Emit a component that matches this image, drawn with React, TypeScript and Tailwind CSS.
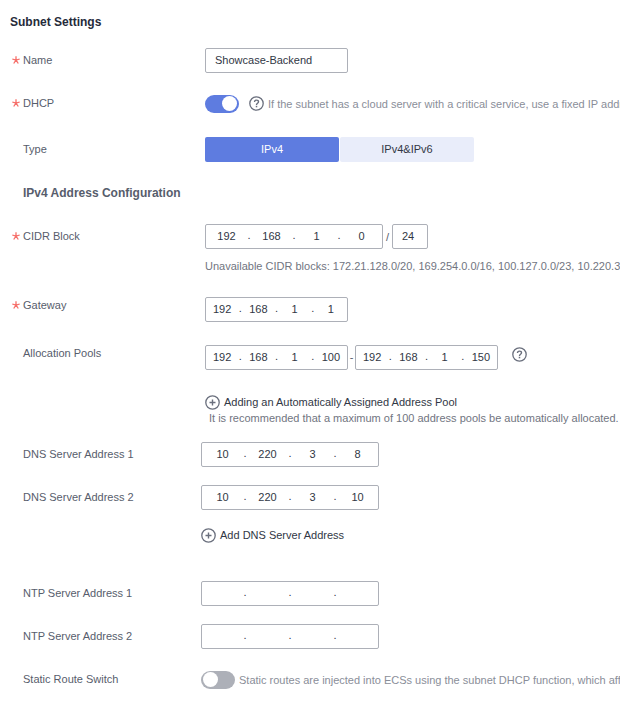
import { useState, type ReactNode } from "react";

type Segments = [string, string, string, string];

function RequiredMark() {
  return (
    <svg className="size-2 shrink-0" viewBox="0 0 8 8" fill="none" stroke="#f66f6a" strokeWidth="1.3" aria-hidden="true">
      <path d="M4 4.2V0.3M4 4.2L0.3 3M4 4.2L7.7 3M4 4.2L1.7 7.5M4 4.2L6.3 7.5" />
    </svg>
  );
}

function HelpIcon() {
  return (
    <svg className="size-[15px] shrink-0" viewBox="0.5 0.5 15 15" fill="none" stroke="#6a6f7d" aria-hidden="true">
      <circle cx="8" cy="8" r="6.7" strokeWidth="1.3" />
      <path d="M6 6.5C6 5.2 6.8 4.6 8 4.6s2 0.7 2 1.7c0 1.4-2 1.5-2 3.1" strokeWidth="1.4" />
      <path d="M8 10.3v1.5" strokeWidth="1.5" />
    </svg>
  );
}

function PlusIcon() {
  return (
    <svg className="size-[15px] shrink-0" viewBox="0.5 0.5 15 15" fill="none" stroke="#6a6f7d" aria-hidden="true">
      <circle cx="8" cy="8" r="6.7" strokeWidth="1.3" />
      <path d="M8 5v6M5 8h6" strokeWidth="1.4" />
    </svg>
  );
}

function Row({
  label,
  htmlFor,
  required = false,
  raised = false,
  narrow = false,
  children,
}: {
  label: string;
  htmlFor: string;
  required?: boolean;
  raised?: boolean;
  narrow?: boolean;
  children: ReactNode;
}) {
  return (
    <div className="flex items-start">
      <div className={`flex shrink-0 items-center pl-3 ${narrow ? "w-[201px]" : "w-[205px]"} ${raised ? "h-4" : "h-6"}`}>
        <span className="flex w-[11px] shrink-0">{required ? <RequiredMark /> : null}</span>
        <label htmlFor={htmlFor}>{label}</label>
      </div>
      <div className="min-w-0 flex-1">{children}</div>
    </div>
  );
}

function IpInput({ id, label, value, small = false }: { id: string; label: string; value: Segments; small?: boolean }) {
  return (
    <div
      className={`flex h-[25px] shrink-0 items-center rounded-xs border border-[#adb0b8] bg-white text-[#313745] ${small ? "w-[143px]" : "w-[178px]"}`}
      role="group"
      aria-label={label}
    >
      {value.map((part, i) => (
        <div key={i} className="contents">
          {i > 0 ? <span className="w-1 pb-[3px] text-center">.</span> : null}
          <input
            id={i === 0 ? id : `${id}-${i + 1}`}
            className="h-full w-0 min-w-0 flex-1 bg-transparent pb-px text-center outline-none"
            aria-label={`${label} octet ${i + 1}`}
            defaultValue={part}
            maxLength={3}
          />
        </div>
      ))}
    </div>
  );
}

function Toggle({ id, defaultChecked = false }: { id: string; defaultChecked?: boolean }) {
  return (
    <input
      id={id}
      type="checkbox"
      role="switch"
      defaultChecked={defaultChecked}
      className="flex h-[18px] w-[34px] shrink-0 cursor-pointer appearance-none items-center rounded-full bg-[#adb0b8] px-[2px] before:size-[15px] before:rounded-full before:bg-white before:content-[''] checked:justify-end checked:bg-[#5e7ce0]"
    />
  );
}

export default function App() {
  const [type, setType] = useState("IPv4");

  return (
    <form
      className="min-h-screen w-full overflow-hidden bg-white pt-3 pb-8 font-['Liberation_Sans',Arial,sans-serif] text-[11px] leading-4 text-[#575d6c]"
      onSubmit={(e) => e.preventDefault()}
    >
      <h1 className="pl-[10px] text-xs leading-5 font-bold text-[#252b3a]">Subnet Settings</h1>

      <div className="mt-4 space-y-[18px]">
        <Row label="Name" htmlFor="name" required>
          <input
            id="name"
            className="block h-[25px] w-[143px] rounded-xs border border-[#adb0b8] px-[9px] pb-px text-[#313745] outline-none"
            defaultValue="Showcase-Backend"
          />
        </Row>
        <Row label="DHCP" htmlFor="dhcp" required>
          <div className="flex h-[25px] items-center">
            <Toggle id="dhcp" defaultChecked />
            <span className="ml-[10px] flex"><HelpIcon /></span>
            <span className="ml-1 whitespace-nowrap text-[#8a8e99]">
              If the subnet has a cloud server with a critical service, use a fixed IP address
            </span>
          </div>
        </Row>
      </div>

      <div className="mt-[21px] space-y-[21px]">
        <Row label="Type" htmlFor="type-ipv4">
          <div className="flex gap-px">
            {["IPv4", "IPv4&IPv6"].map((option) => (
              <button
                key={option}
                id={option === "IPv4" ? "type-ipv4" : "type-dual"}
                type="button"
                aria-pressed={type === option}
                onClick={() => setType(option)}
                className={`h-[25px] w-[134px] rounded-xs pb-px ${type === option ? "bg-[#5e7ce0] text-white" : "bg-[#e9edfa] text-[#313745]"}`}
              >
                {option}
              </button>
            ))}
          </div>
        </Row>

        <h2 className="pl-[23px] text-xs leading-5 font-bold">IPv4 Address Configuration</h2>

        <Row label="CIDR Block" htmlFor="cidr" required>
          <div className="flex items-center">
            <IpInput id="cidr" label="CIDR Block" value={["192", "168", "1", "0"]} />
            <span className="w-[9px] text-center">/</span>
            <input
              className="h-[25px] w-9 rounded-xs border border-[#adb0b8] pr-1 pb-px text-center text-[#313745] outline-none"
              aria-label="Prefix length"
              defaultValue="24"
            />
          </div>
          <p className="mt-[9px] whitespace-nowrap text-[#71757f]">
            Unavailable CIDR blocks: 172.21.128.0/20, 169.254.0.0/16, 100.127.0.0/23, 10.220.3.0/24
          </p>
        </Row>
      </div>

      <div className="mt-[23px] space-y-[23px]">
        <Row label="Gateway" htmlFor="gateway" required raised>
          <IpInput id="gateway" label="Gateway" value={["192", "168", "1", "1"]} small />
        </Row>
        <Row label="Allocation Pools" htmlFor="pool-start" raised>
          <div className="flex">
            <IpInput id="pool-start" label="Pool start" value={["192", "168", "1", "100"]} small />
            <span className="w-[7px] text-center leading-6">-</span>
            <IpInput id="pool-end" label="Pool end" value={["192", "168", "1", "150"]} small />
            <span className="ml-[14px] flex pt-[2px]"><HelpIcon /></span>
          </div>
          <button type="button" className="mt-6 flex items-center gap-1 text-[#313745]">
            <PlusIcon />
            Adding an Automatically Assigned Address Pool
          </button>
          <p className="pl-1 whitespace-nowrap text-[#71757f]">
            It is recommended that a maximum of 100 address pools be automatically allocated.
          </p>
        </Row>
      </div>

      <div className="mt-4 space-y-[18px]">
        <Row label="DNS Server Address 1" htmlFor="dns1" narrow>
          <IpInput id="dns1" label="DNS Server Address 1" value={["10", "220", "3", "8"]} />
        </Row>
        <Row label="DNS Server Address 2" htmlFor="dns2" narrow>
          <IpInput id="dns2" label="DNS Server Address 2" value={["10", "220", "3", "10"]} />
          <button type="button" className="mt-[17px] flex items-center gap-1 text-[#313745]">
            <PlusIcon />
            Add DNS Server Address
          </button>
        </Row>
      </div>

      <div className="mt-[38px] space-y-[18px]">
        <Row label="NTP Server Address 1" htmlFor="ntp1" narrow>
          <IpInput id="ntp1" label="NTP Server Address 1" value={["", "", "", ""]} />
        </Row>
        <Row label="NTP Server Address 2" htmlFor="ntp2" narrow>
          <IpInput id="ntp2" label="NTP Server Address 2" value={["", "", "", ""]} />
        </Row>
        <Row label="Static Route Switch" htmlFor="static-route" narrow>
          <div className="flex h-[25px] items-center gap-1">
            <Toggle id="static-route" />
            <span className="whitespace-nowrap text-[#8a8e99]">
              Static routes are injected into ECSs using the subnet DHCP function, which affects
            </span>
          </div>
        </Row>
      </div>
    </form>
  );
}
